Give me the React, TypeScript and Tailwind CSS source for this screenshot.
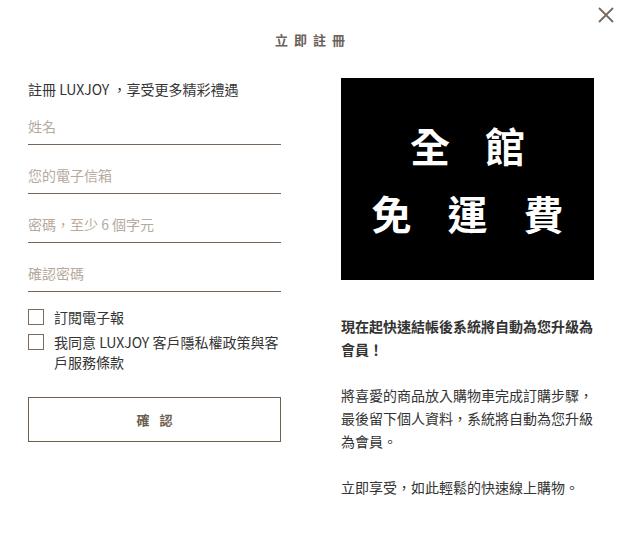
import React from "react";

const font = { fontFamily: '"Noto Sans CJK TC", "Noto Sans", sans-serif' };

function Field({ placeholder, type = "text" }: { placeholder: string; type?: string }) {
  return (
    <div className="h-[49px] flex items-end border-b border-[#76675a]">
      <input
        type={type}
        placeholder={placeholder}
        className="w-full h-[20px] mb-[8px] text-[14px] leading-[20px] outline-none bg-transparent placeholder:text-[#b6aa9d] text-[#333]"
        style={font}
      />
    </div>
  );
}

function Check({ children }: { children: React.ReactNode }) {
  return (
    <label className="flex items-start gap-[10px]">
      <span className="mt-[2px] w-[16px] h-[16px] shrink-0 border-[1.5px] border-[#7b6c5e] bg-white" />
      <span className="text-[14px] leading-[20px] text-[#333]">{children}</span>
    </label>
  );
}

export default function App() {
  return (
    <div className="w-[620px] h-[534px] bg-white relative" style={font}>
      <button className="absolute right-[6px] top-[7px] w-[16px] h-[16px]" aria-label="close">
        <svg viewBox="0 0 16 16" width="16" height="16">
          <path d="M1 1 L15 15 M15 1 L1 15" stroke="#75695e" strokeWidth="1.8" />
        </svg>
      </button>
      <div className="pt-[30px]">
        <h2 className="text-center text-[13px] leading-[20px] font-bold text-[#6b6159] tracking-[6px] pl-[6px]">
          立即註冊
        </h2>
      </div>
      <div className="mt-[28px] flex gap-[60px] px-[28px]">
        <div className="w-[253px] shrink-0">
          <p className="text-[14px] leading-[22px] text-[#333]">註冊 LUXJOY ，享受更多精彩禮遇</p>
          <div className="-mt-[4px]">
            <Field placeholder="姓名" />
            <Field placeholder="您的電子信箱" />
            <Field placeholder="密碼，至少 6 個字元" type="password" />
            <Field placeholder="確認密碼" type="password" />
          </div>
          <div className="mt-[15px] flex flex-col gap-[5px]">
            <Check>訂閱電子報</Check>
            <Check>我同意 LUXJOY 客戶隱私權政策與客戶服務條款</Check>
          </div>
          <button className="mt-[25px] w-full h-[45px] border border-[#6e5f50] text-[13px] font-bold text-[#6d5e4f] tracking-[10px] pl-[10px]">
            確認
          </button>
        </div>
        <div className="w-[253px] shrink-0">
          <div className="h-[202px] bg-black flex flex-col items-center justify-center gap-[28px] text-white font-bold text-[40px] leading-[40px]">
            <div className="flex gap-[35px]">
              <span>全</span>
              <span>館</span>
            </div>
            <div className="flex gap-[36px]">
              <span>免</span>
              <span>運</span>
              <span>費</span>
            </div>
          </div>
          <div className="mt-[35px] text-[14px] leading-[23px] text-[#333]">
            <p className="font-bold">現在起快速結帳後系統將自動為您升級為會員！</p>
            <p className="mt-[23px]">將喜愛的商品放入購物車完成訂購步驟，最後留下個人資料，系統將自動為您升級為會員。</p>
            <p className="mt-[23px]">立即享受，如此輕鬆的快速線上購物。</p>
          </div>
        </div>
      </div>
    </div>
  );
}
